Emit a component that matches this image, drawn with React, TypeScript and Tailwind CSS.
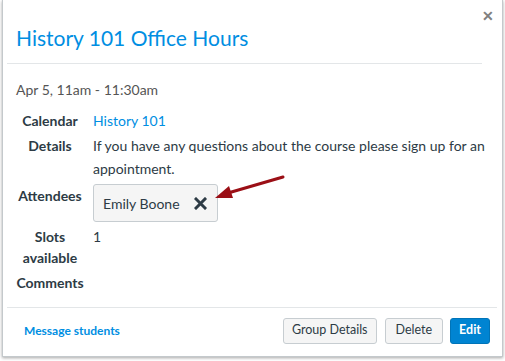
import React from 'react';

const App = () => {
  return (
    <div className="w-[505px] h-[361px] bg-white overflow-hidden" style={{ fontFamily: 'Lato, "Noto Sans", sans-serif' }}>
      <div className="relative ml-[2px] w-[501px] h-[357px] bg-white border-x border-b border-[#c4c9cc] shadow-[0_1px_3px_rgba(0,0,0,0.35)] flex flex-col">
        <button className="absolute right-[8px] top-[9px] text-[#808080] text-[14px] font-bold leading-none">✕</button>

        <div className="pl-[9px] pt-[25px] pb-[12px] mr-[20px] ml-[4px] border-b border-[#e3e6e8]">
          <h1 className="text-[21px] leading-[26px] text-[#008ee2]">History 101 Office Hours</h1>
        </div>

        <div className="pl-[13px] pt-[17px] text-[#555] text-[14px] leading-[18px]">Apr 5, 11am - 11:30am</div>

        <div className="grid grid-cols-[68px_1fr] gap-x-[9px] pl-[13px] pr-[14px] pt-[10px] text-[14px] leading-[23px] text-[#2d3b45]">
          <div className="text-center font-bold">Calendar</div>
          <div className="text-[#008ee2]">History 101</div>

          <div className="text-center font-bold pt-[2px]">Details</div>
          <div className="pt-[2px]">If you have any questions about the course please sign up for an appointment.</div>

          <div className="text-center font-bold pt-[4px]">Attendees</div>
          <div className="pt-[4px] relative">
            <div className="inline-flex items-center gap-[14px] h-[38px] pl-[9px] pr-[10px] bg-[#f5f5f5] border border-[#c7cdd1] rounded-[3px]">
              <span>Emily Boone</span>
              <svg width="13" height="13" viewBox="0 0 13 13">
                <path d="M2 2 L11 11 M11 2 L2 11" stroke="#2d3b45" strokeWidth="3" strokeLinecap="square" />
              </svg>
            </div>
            <svg className="absolute left-[121px] top-[-6px]" width="72" height="32" viewBox="0 0 72 32">
              <path d="M69 3 L14 19" stroke="#9b0f16" strokeWidth="3" strokeLinecap="round" />
              <path d="M1 24 L15 12 L19 24 Z" fill="#9b0f16" />
            </svg>
          </div>

          <div className="text-center font-bold leading-[21px] pt-[4px]">Slots<br />available</div>
          <div className="leading-[21px] pt-[4px]">1</div>

          <div className="text-center font-bold pt-[3px]">Comments</div>
          <div></div>
        </div>

        <div className="mt-[13px] ml-[4px] mr-[5px] border-t border-[#e3e6e8] flex items-center justify-between pl-[17px] pr-[7px] h-[46px]">
          <a className="text-[#008ee2] text-[12px] font-bold">Message students</a>
          <div className="flex">
            <button className="h-[26px] px-[8px] text-[12.5px] text-[#2d3b45] bg-[#f5f5f5] border border-[#c7cdd1] rounded-[3px]">Group Details</button>
            <button className="ml-[8px] h-[26px] px-[10px] text-[12.5px] text-[#2d3b45] bg-[#f5f5f5] border border-[#c7cdd1] rounded-[3px]">Delete</button>
            <button className="ml-[7px] h-[26px] px-[8px] text-[12.5px] font-bold text-white bg-[#0084d2] border border-[#0074b8] rounded-[3px]">Edit</button>
          </div>
        </div>
      </div>
    </div>
  );
};

export default App;
